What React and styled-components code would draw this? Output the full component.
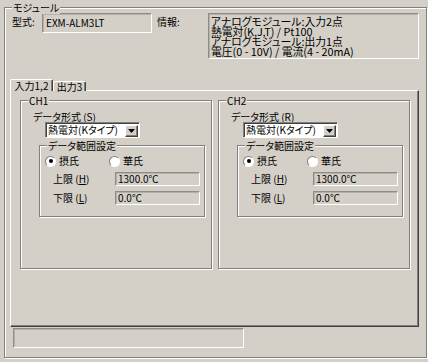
import styled, { createGlobalStyle } from "styled-components";

const GlobalStyle = createGlobalStyle`
  html, body {
    margin: 0;
    padding: 0;
  }
  body {
    background: #d4d0c8;
    font-family: "Noto Sans CJK JP", "Noto Sans", sans-serif;
    font-size: 10px;
    font-feature-settings: "palt";
    color: #000;
  }
`;

const Window = styled.div`
  width: 428px;
  height: 362px;
  box-sizing: border-box;
  padding: 7px 0 0 4px;
  background: #d4d0c8;
  overflow: hidden;
`;

const Group = styled.div`
  position: relative;
  box-sizing: border-box;
  display: flex;
  flex-direction: column;
  align-items: flex-start;
  flex: none;
  width: ${(p) => p.$w}px;
  height: ${(p) => p.$h}px;
  border: 1px solid #808080;
  box-shadow: inset 1px 1px #fff, 1px 1px #fff;
`;

const ModuleBox = styled(Group)`
  padding: 5px 0 0 5px;
`;

const Legend = styled.span`
  position: absolute;
  top: -7px;
  left: 7px;
  padding: 0 1px;
  line-height: 13px;
  background: #d4d0c8;
  white-space: nowrap;
`;

const InfoRow = styled.div`
  display: flex;
  align-items: flex-start;
  height: 46px;
  margin-left: 2px;
`;

const FieldLabel = styled.span`
  flex: none;
  width: ${(p) => p.$w}px;
  margin-left: ${(p) => p.$ml || 0}px;
  line-height: 18px;
  white-space: nowrap;
`;

const Sunken = styled.div`
  box-sizing: border-box;
  flex: none;
  width: ${(p) => p.$w}px;
  height: ${(p) => p.$h}px;
  border: 1px solid;
  border-color: #8e8c87 #fff #fff #8e8c87;
  box-shadow: inset 1px 1px #b4b1aa;
  background: #d4d0c8;
  white-space: nowrap;
  overflow: hidden;
`;

const ModelBox = styled(Sunken)`
  padding-left: 3px;
  line-height: 18px;
`;

const InfoBox = styled(Sunken)`
  padding: 2px 0 0 2px;
  font-size: 10.8px;
  line-height: 10px;
`;

const TabStrip = styled.div`
  display: flex;
  align-items: flex-end;
  height: 12px;
  margin-top: 20px;
`;

const Tab = styled.div`
  box-sizing: border-box;
  position: relative;
  z-index: ${(p) => (p.$active ? 1 : 0)};
  width: ${(p) => p.$w}px;
  height: ${(p) => (p.$active ? 12 : 10)}px;
  border: 1px solid;
  border-bottom: none;
  border-color: #fff #404040 #404040 #fff;
  border-radius: 2px 2px 0 0;
  box-shadow: inset -1px 0 #808080;
  background: #d4d0c8;
  text-align: center;
  line-height: ${(p) => (p.$active ? 11 : 9)}px;
  white-space: nowrap;
`;

const TabPanel = styled.div`
  box-sizing: border-box;
  display: flex;
  gap: 6px;
  width: 409px;
  height: 237px;
  margin-top: -1px;
  padding: 9px 0 0 9px;
  border: 1px solid;
  border-color: #fff #404040 #404040 #fff;
  box-shadow: inset -1px -1px #808080;
`;

const Caption = styled.div`
  margin: 10px 0 0 12px;
  line-height: 11px;
  white-space: nowrap;
`;

const Combo = styled.div`
  box-sizing: border-box;
  display: flex;
  align-items: center;
  width: 95px;
  height: 16px;
  margin-left: 24px;
  border: 1px solid;
  border-color: #808080 #fff #fff #808080;
  box-shadow: inset 1px 1px #404040;
  background: #fff;
`;

const ComboText = styled.span`
  flex: 1;
  min-width: 0;
  overflow: hidden;
  padding-left: 2px;
  line-height: 14px;
  white-space: nowrap;
`;

const ComboButton = styled.span`
  box-sizing: border-box;
  flex: none;
  display: flex;
  align-items: center;
  justify-content: center;
  width: 13px;
  height: 12px;
  margin-right: 1px;
  margin-top: 1px;
  border: 1px solid;
  border-color: #fff #404040 #404040 #fff;
  box-shadow: inset -1px -1px #808080;
  background: #d4d0c8;
`;

const RangeGroup = styled(Group)`
  margin: 7px 0 0 18px;
`;

const RadioRow = styled.div`
  display: flex;
  align-items: center;
  height: 12px;
  margin: 9px 0 0 5px;
`;

const RadioItem = styled.label`
  display: flex;
  align-items: center;
  gap: 3px;
  width: 64px;
  line-height: 12px;
`;

const RadioDot = styled.span`
  box-sizing: border-box;
  display: flex;
  align-items: center;
  justify-content: center;
  width: 11px;
  height: 11px;
  border-radius: 50%;
  border: 1px solid;
  border-color: #808080 #fff #fff #808080;
  background: #fff;

  &::after {
    content: "";
    width: 4px;
    height: 4px;
    border-radius: 50%;
    background: ${(p) => (p.$on ? "#000" : "transparent")};
  }
`;

const LimitRow = styled.div`
  display: flex;
  align-items: center;
  height: 14px;
  margin: 5px 0 0 13px;
`;

const LimitLabel = styled.span`
  width: 62px;
  line-height: 14px;
  white-space: nowrap;
`;

const LimitBox = styled(Sunken)`
  padding-left: 2px;
  line-height: 12px;
`;

const StatusBox = styled(Sunken)`
  margin: 1px 0 0 3px;
`;

function Channel({ name, key1 }) {
  return (
    <Group $w={192} $h={169}>
      <Legend>{name}</Legend>
      <Caption>
        データ形式 (<u>{key1}</u>)
      </Caption>
      <Combo>
        <ComboText>熱電対(Kタイプ)</ComboText>
        <ComboButton>
          <svg width="7" height="4" viewBox="0 0 7 4">
            <path d="M0 0h7L3.5 4z" fill="#000" />
          </svg>
        </ComboButton>
      </Combo>
      <RangeGroup $w={166} $h={72}>
        <Legend>データ範囲設定</Legend>
        <RadioRow>
          <RadioItem>
            <RadioDot $on />
            摂氏
          </RadioItem>
          <RadioItem>
            <RadioDot />
            華氏
          </RadioItem>
        </RadioRow>
        <LimitRow>
          <LimitLabel>
            上限 (<u>H</u>)
          </LimitLabel>
          <LimitBox $w={85} $h={14}>1300.0℃</LimitBox>
        </LimitRow>
        <LimitRow>
          <LimitLabel>
            下限 (<u>L</u>)
          </LimitLabel>
          <LimitBox $w={85} $h={14}>0.0℃</LimitBox>
        </LimitRow>
      </RangeGroup>
    </Group>
  );
}

export default function App() {
  return (
    <Window>
      <GlobalStyle />
      <ModuleBox $w={423} $h={351}>
        <Legend>モジュール</Legend>
        <InfoRow>
          <FieldLabel $w={30}>型式:</FieldLabel>
          <ModelBox $w={110} $h={20}>EXM-ALM3LT</ModelBox>
          <FieldLabel $w={51} $ml={5}>
            情報:
          </FieldLabel>
          <InfoBox $w={211} $h={46}>
            アナログモジュール:入力2点
            <br />
            熱電対(K,J,T) / Pt100
            <br />
            アナログモジュール:出力1点
            <br />
            電圧(0 - 10V) / 電流(4 - 20mA)
          </InfoBox>
        </InfoRow>
        <TabStrip>
          <Tab $active $w={43}>
            入力1,2
          </Tab>
          <Tab $w={33}>出力3</Tab>
        </TabStrip>
        <TabPanel>
          <Channel name="CH1" key1="S" />
          <Channel name="CH2" key1="R" />
        </TabPanel>
        <StatusBox $w={231} $h={20} />
      </ModuleBox>
    </Window>
  );
}
